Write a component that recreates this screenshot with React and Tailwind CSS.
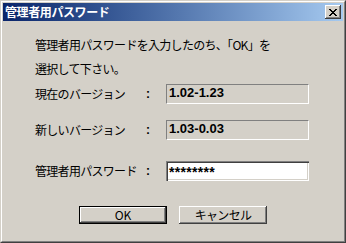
export default function App() {
  const jp = { fontFamily: '"Noto Sans CJK JP", sans-serif' };
  const lib = { fontFamily: '"Liberation Sans", sans-serif' };
  return (
    <div className="w-[346px] h-[243px] bg-[#d4d0c8] border border-t-[#d4d0c8] border-l-[#d4d0c8] border-r-[#404040] border-b-[#404040]" style={jp}>
      <div className="h-full border border-t-white border-l-white border-r-[#808080] border-b-[#808080] p-px flex flex-col">
        <div className="h-[18px] flex items-center justify-between pl-[2px] pr-[2px] bg-gradient-to-r from-[#0a246a] to-[#a6caf0]">
          <span className="text-white font-bold text-[12px] leading-[18px] tracking-[-0.4px]">管理者用パスワード</span>
          <div className="w-[16px] h-[14px] bg-[#d4d0c8] flex items-center justify-center shadow-[inset_-1px_-1px_#404040,inset_1px_1px_#ffffff,inset_-2px_-2px_#808080]">
            <svg width="8" height="7" viewBox="0 0 8 7" shapeRendering="crispEdges">
              <path d="M0 0h2v1h-2zM6 0h2v1h-2zM1 1h2v1h-2zM5 1h2v1h-2zM2 2h4v1h-4zM3 3h2v1h-2zM2 4h4v1h-4zM1 5h2v1h-2zM5 5h2v1h-2zM0 6h2v1h-2zM6 6h2v1h-2z" fill="#000" />
            </svg>
          </div>
        </div>
        <div className="pl-[32px] mt-[12px] text-[12px] leading-[24px] text-black tracking-[-0.7px]">
          <div>管理者用パスワードを入力したのち、「OK」を</div>
          <div>選択して下さい。</div>
        </div>
        <div className="pl-[32px] mt-[3px] flex items-center h-[20px] text-[12px]">
          <span className="w-[111px] tracking-[-0.7px]">現在のバージョン</span>
          <span className="w-[20px] font-bold" style={lib}>:</span>
          <div className="w-[143px] h-[20px] border border-t-[#808080] border-l-[#808080] border-r-white border-b-white pl-[2px] font-bold text-[13px] leading-[16px]" style={lib}>1.02-1.23</div>
        </div>
        <div className="pl-[32px] mt-[16px] flex items-center h-[20px] text-[12px]">
          <span className="w-[111px] tracking-[-0.7px]">新しいバージョン</span>
          <span className="w-[20px] font-bold" style={lib}>:</span>
          <div className="w-[143px] h-[20px] border border-t-[#808080] border-l-[#808080] border-r-white border-b-white pl-[2px] font-bold text-[13px] leading-[16px]" style={lib}>1.03-0.03</div>
        </div>
        <div className="pl-[32px] mt-[21px] flex items-center h-[20px] text-[12px]">
          <span className="w-[111px] tracking-[-0.7px]">管理者用パスワード</span>
          <span className="w-[20px] font-bold" style={lib}>:</span>
          <div className="w-[143px] h-[20px] bg-white shadow-[inset_1px_1px_#808080,inset_2px_2px_#404040,inset_-1px_-1px_#ffffff,inset_-2px_-2px_#d4d0c8] pl-[3px] pt-[3px] font-bold text-[14px] leading-[16px] tracking-[0.3px]" style={lib}>********</div>
        </div>
        <div className="mt-[25px] flex justify-center gap-[12px] text-[12px]">
          <div className="w-[88px] h-[18px] border border-black flex items-center justify-center shadow-[inset_-1px_-1px_#404040,inset_1px_1px_#ffffff,inset_-2px_-2px_#808080] leading-none">OK</div>
          <div className="w-[88px] h-[18px] flex items-center justify-center shadow-[inset_-1px_-1px_#404040,inset_1px_1px_#ffffff,inset_-2px_-2px_#808080] tracking-[-0.7px] leading-none">キャンセル</div>
        </div>
      </div>
    </div>
  );
}
